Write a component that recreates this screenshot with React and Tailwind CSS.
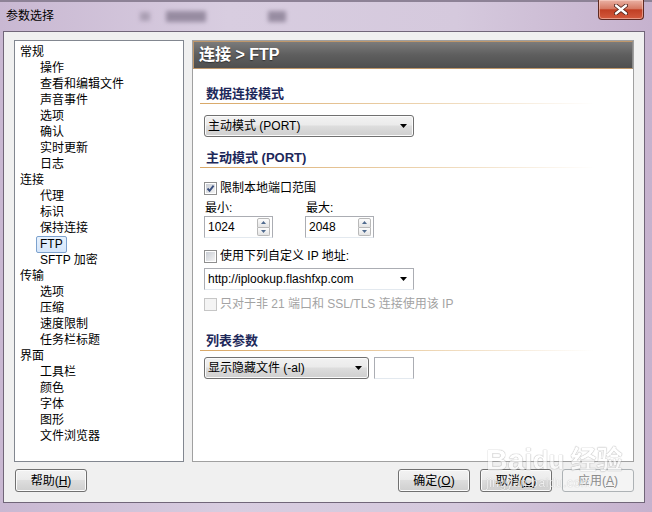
import React from 'react';

const TREE = [
  { label: '常规', items: ['操作', '查看和编辑文件', '声音事件', '选项', '确认', '实时更新', '日志'] },
  { label: '连接', items: ['代理', '标识', '保持连接', 'FTP', 'SFTP 加密'] },
  { label: '传输', items: ['选项', '压缩', '速度限制', '任务栏标题'] },
  { label: '界面', items: ['工具栏', '颜色', '字体', '图形', '文件浏览器'] },
];

const BTN =
  'border-[#707070] bg-[linear-gradient(#f2f2f2,#ebebeb_45%,#dddddd_50%,#cfcfcf)] shadow-[inset_0_0_0_1px_#fbfbfb]';

function Arrow() {
  return (
    <svg width="7" height="4" viewBox="0 0 7 4">
      <path d="M0 0h7L3.5 4z" fill="#000" />
    </svg>
  );
}

function Check({ checked, disabled }) {
  return (
    <span
      className={`w-[13px] h-[13px] shrink-0 border p-[1px] ${
        disabled ? 'border-[#c6c6c6] bg-[#f4f4f4]' : 'border-[#8f8f8f] bg-white'
      }`}
    >
      <span
        className={`block w-full h-full relative ${
          disabled ? 'bg-[#f4f4f4]' : 'bg-[linear-gradient(135deg,#c9cdd4,#f4f4f4)]'
        }`}
      >
        {checked && (
          <svg width="9" height="9" viewBox="0 0 9 9" className="absolute left-0 top-0">
            <path d="M1.5 4.5 3.6 6.8 7.6 1.6" fill="none" stroke="#3a4f7e" strokeWidth="1.9" />
          </svg>
        )}
      </span>
    </span>
  );
}

function Spin({ value }) {
  return (
    <div className="w-[69px] h-[22px] border border-[#abadb3] border-b-[#e3e9ef] bg-white flex items-center pl-[3px] pr-[2px]">
      <span className="flex-1">{value}</span>
      <div className="flex flex-col w-[13px] h-[18px]">
        <div className="flex-1 border border-[#b9b9b9] rounded-t-[2px] bg-[linear-gradient(#fcfcfc,#e4e4e4)] flex items-center justify-center">
          <svg width="5" height="3" viewBox="0 0 5 3">
            <path d="M0 3h5L2.5 0z" fill="#4f6a8e" />
          </svg>
        </div>
        <div className="flex-1 border border-t-0 border-[#b9b9b9] rounded-b-[2px] bg-[linear-gradient(#fcfcfc,#e4e4e4)] flex items-center justify-center">
          <svg width="5" height="3" viewBox="0 0 5 3">
            <path d="M0 0h5L2.5 3z" fill="#4f6a8e" />
          </svg>
        </div>
      </div>
    </div>
  );
}

function Heading({ children, mt }) {
  return (
    <div className={`-ml-[4px] w-[395px] ${mt}`}>
      <div className="h-[16px] leading-[16px] pl-[6px] text-[13px] font-bold text-[#1d285a]">{children}</div>
      <div className="mt-[1px] h-[1px] bg-[linear-gradient(90deg,#d9a867,#ecd2ad_55%,#ffffff)]" />
    </div>
  );
}

function Button({ children, disabled }) {
  return (
    <div
      className={`w-[72px] h-[23px] rounded-[3px] border flex items-center justify-center ${
        disabled ? 'border-[#adb2b5] bg-[#f4f4f4] text-[#8c8c8c]' : BTN
      }`}
    >
      {children}
    </div>
  );
}

export default function App() {
  return (
    <div className="w-[652px] h-[512px] relative overflow-hidden bg-[linear-gradient(90deg,#c9b8d2,#d8cde0_35%,#d5c9dd_70%,#c6b2ce)] text-[12px] text-black [font-family:'Liberation_Sans','Noto_Sans_CJK_SC',sans-serif]">
      {/* blurred glass behind title */}
      <div className="absolute left-[140px] top-[12px] w-[10px] h-[9px] bg-[#9a8fa3] blur-[2px] opacity-70" />
      <div className="absolute left-[166px] top-[11px] w-[40px] h-[11px] bg-[#7d7288] blur-[2px] opacity-70" />
      <div className="absolute left-[268px] top-[11px] w-[18px] h-[11px] bg-[#7d7288] blur-[2px] opacity-70" />
      <div className="absolute left-[0px] top-0 w-[652px] h-[2px] bg-[#8d8296]" />

      {/* title bar */}
      <div className="h-[31px] flex items-center pl-[6px] relative">
        <span className="leading-[16px] pt-[1px]">参数选择</span>
      </div>

      {/* close button */}
      <div className="absolute left-[598px] top-0 w-[46px] h-[20px] rounded-b-[4px] border border-t-0 border-[#5e2a22] bg-[linear-gradient(#eab2a4,#d67a64_45%,#c13f24_52%,#d35a3e)] shadow-[inset_0_0_0_1px_rgba(255,220,210,0.5)] flex items-center justify-center">
        <svg width="14" height="11" viewBox="0 0 14 11">
          <path d="M2 1.5 12 9.5M12 1.5 2 9.5" stroke="#4a1d16" strokeWidth="4" strokeLinecap="round" />
          <path d="M2 1.5 12 9.5M12 1.5 2 9.5" stroke="#ffffff" strokeWidth="2.4" strokeLinecap="round" />
        </svg>
      </div>

      {/* client area */}
      <div className="ml-[3px] w-[642px] h-[472px] border border-[#716679] bg-[#f0f0f0] flex flex-col">
        <div className="flex gap-[8px] pt-[8px] pl-[10px]">
          {/* tree */}
          <div className="w-[170px] h-[422px] border border-[#828790] bg-white pt-[3px] pl-[5px]">
            {TREE.map((g) => (
              <div key={g.label}>
                <div className="h-[16px] leading-[16px]">{g.label}</div>
                {g.items.map((it) => (
                  <div key={g.label + it} className="h-[16px] flex items-center">
                    <span
                      className={`ml-[16px] h-[17px] px-[3px] rounded-[2px] border leading-[15px] ${
                        it === 'FTP'
                          ? 'border-[#7da2ce] bg-[linear-gradient(#e8f2fd,#d5e6fb)]'
                          : 'border-transparent'
                      }`}
                    >
                      {it}
                    </span>
                  </div>
                ))}
              </div>
            ))}
          </div>

          {/* right panel */}
          <div className="w-[442px] h-[422px] border border-[#a0a0a0] bg-white flex flex-col">
            <div className="h-[28px] border border-[#bf976a] border-r-[#8a8a8a] bg-[linear-gradient(#7b7b7b,#5e5e5e_50%,#4f4f4f)] flex items-center pl-[5px]">
              <span className="text-[16px] font-bold text-white leading-[20px] [text-shadow:0_1px_1px_#333]">连接 &gt; FTP</span>
            </div>

            <div className="pl-[11px] flex flex-col">
              <Heading mt="mt-[17px]">数据连接模式</Heading>

              <div className={`mt-[11px] w-[210px] h-[22px] rounded-[3px] border flex items-center justify-between pl-[3px] pr-[6px] ${BTN}`}>
                <span>主动模式 (PORT)</span>
                <Arrow />
              </div>

              <Heading mt="mt-[13px]">主动模式 (PORT)</Heading>

              <div className="mt-[12px] h-[16px] flex items-center gap-[3px]">
                <Check checked />
                <span>限制本地端口范围</span>
              </div>

              <div className="mt-[4px] flex gap-[32px]">
                <div className="flex flex-col">
                  <div className="h-[16px] leading-[16px] pl-[1px]">最小:</div>
                  <Spin value="1024" />
                </div>
                <div className="flex flex-col">
                  <div className="h-[16px] leading-[16px] pl-[1px]">最大:</div>
                  <Spin value="2048" />
                </div>
              </div>

              <div className="mt-[10px] h-[16px] flex items-center gap-[3px]">
                <Check />
                <span>使用下列自定义 IP 地址:</span>
              </div>

              <div className="mt-[4px] w-[210px] h-[22px] border border-[#abadb3] border-b-[#e3e9ef] bg-white flex items-center justify-between pl-[3px] pr-[6px]">
                <span>http://iplookup.flashfxp.com</span>
                <Arrow />
              </div>

              <div className="mt-[6px] h-[16px] flex items-center gap-[3px] text-[#a3a3a3]">
                <Check disabled />
                <span>只对于非 21 端口和 SSL/TLS 连接使用该 IP</span>
              </div>

              <Heading mt="mt-[21px]">列表参数</Heading>

              <div className="mt-[6px] flex gap-[5px]">
                <div className={`w-[165px] h-[22px] rounded-[3px] border flex items-center justify-between pl-[3px] pr-[6px] ${BTN}`}>
                  <span>显示隐藏文件 (-al)</span>
                  <Arrow />
                </div>
                <div className="w-[40px] h-[22px] border border-[#abadb3] border-b-[#e3e9ef] bg-white" />
              </div>
            </div>
          </div>
        </div>

        {/* bottom buttons */}
        <div className="mt-[7px] flex justify-between pl-[11px] pr-[10px]">
          <Button>
            <span>帮助(<u>H</u>)</span>
          </Button>
          <div className="flex gap-[10px]">
            <Button>
              <span>确定(<u>O</u>)</span>
            </Button>
            <Button>
              <span>取消(<u>C</u>)</span>
            </Button>
            <Button disabled>
              <span>应用(<u>A</u>)</span>
            </Button>
          </div>
        </div>
      </div>

      {/* watermark */}
      <div className="absolute left-[486px] top-[444px] flex flex-col items-start opacity-60 pointer-events-none">
        <div className="flex items-end text-[30px] font-bold leading-[32px] text-white [text-shadow:0_0_1px_#777,0_0_1px_#777]">
          <span>Bai</span>
          <span className="text-[26px]">du</span>
          <span className="ml-[6px] text-[26px]">经验</span>
        </div>
        <div className="text-[12px] leading-[14px] text-white [text-shadow:0_0_1px_#777] tracking-[0.5px]">jingyan.baidu.com</div>
      </div>
    </div>
  );
}
